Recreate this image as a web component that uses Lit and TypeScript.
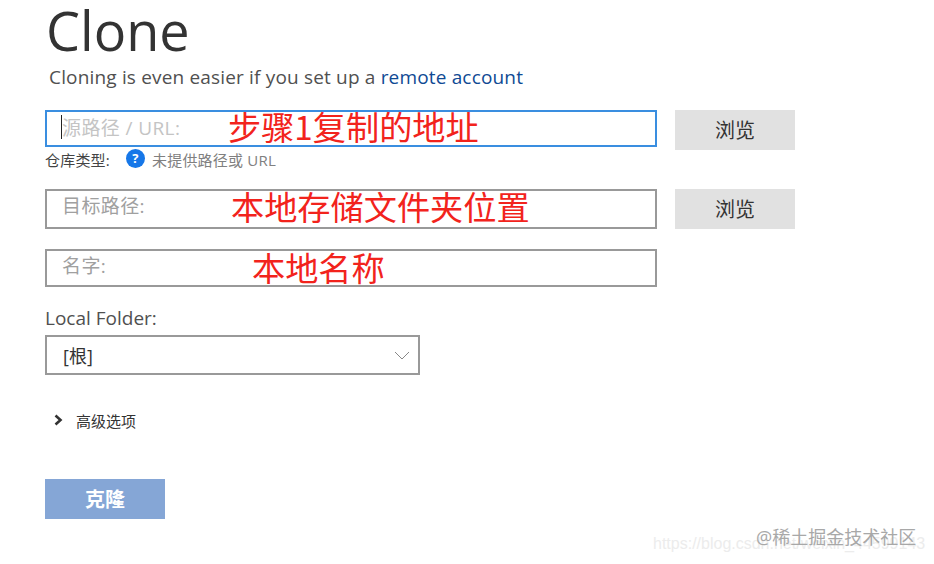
import { LitElement, html, css } from 'lit';
import { customElement } from 'lit/decorators.js';

@customElement('app-root')
export class AppRoot extends LitElement {
  static styles = css`
    :host {
      display: block;
      position: relative;
      width: 934px;
      height: 564px;
      overflow: hidden;
      background: #fff;
      font-family: 'Open Sans', 'Noto Sans CJK SC', sans-serif;
      color: #333;
    }

    .page {
      display: flex;
      flex-direction: column;
      align-items: flex-start;
      padding: 0 0 0 45px;
    }

    h1 {
      margin: 0;
      height: 62px;
      padding-left: 1px;
      font-size: 54px;
      line-height: 60px;
      font-weight: 400;
      color: #333;
    }

    .intro {
      margin: 3px 0 0 4px;
      height: 26px;
      font-size: 19px;
      letter-spacing: 0.17px;
      line-height: 24px;
      color: #505050;
    }

    .intro a {
      color: #0f4a94;
      text-decoration: none;
    }

    .row {
      display: flex;
      align-items: flex-start;
      gap: 18px;
    }

    .field {
      box-sizing: border-box;
      width: 612px;
      height: 38px;
      display: flex;
      align-items: center;
      padding: 0 15px 6px;
      border: 2px solid #999;
      background: #fff;
      font-size: 19px;
      letter-spacing: 0.4px;
      color: #a0a0a0;
    }

    .field.focus {
      height: 37px;
      padding-bottom: 4px;
      border-color: #3a8ee0;
      color: #c4c4c4;
    }

    .field.tall {
      height: 40px;
      padding-bottom: 8px;
    }

    .caret {
      width: 1px;
      height: 24px;
      margin: 0 0 0 -1px;
      background: #222;
    }

    .browse {
      width: 120px;
      height: 40px;
      padding-bottom: 1px;
      box-sizing: border-box;
      display: flex;
      align-items: center;
      justify-content: center;
      background: #e1e1e1;
      font-size: 20px;
      color: #333;
    }

    .status {
      display: flex;
      align-items: center;
      height: 20px;
      margin-top: -1px;
      margin-bottom: 2px;
      font-size: 15px;
      letter-spacing: 0.2px;
      color: #444;
    }

    .status .kind {
      width: 81px;
    }

    .status .hint {
      margin-left: 7px;
      color: #808080;
    }

    .help {
      width: 19px;
      height: 19px;
      margin-top: -2px;
      border-radius: 50%;
      display: flex;
      align-items: center;
      justify-content: center;
      background: #1677e8;
      color: #fff;
      font-size: 13px;
      font-weight: 700;
    }

    .label {
      margin-top: 17px;
      height: 31px;
      font-size: 19px;
      line-height: 28px;
      color: #505050;
    }

    .select {
      box-sizing: border-box;
      width: 375px;
      height: 40px;
      display: flex;
      align-items: center;
      justify-content: space-between;
      padding: 0 8px 0 16px;
      border: 2px solid #999;
      font-size: 18px;
      color: #333;
    }

    .advanced {
      display: flex;
      align-items: center;
      gap: 13px;
      height: 20px;
      margin-top: 35px;
      padding-left: 9px;
      font-size: 15px;
      color: #333;
    }

    .submit {
      width: 120px;
      height: 40px;
      margin-top: 49px;
      padding-bottom: 1px;
      box-sizing: border-box;
      display: flex;
      align-items: center;
      justify-content: center;
      background: #85a6d6;
      color: #fff;
      font-size: 20px;
      font-weight: 700;
    }

    .note {
      position: absolute;
      font-size: 33.2px;
      line-height: 40px;
      white-space: nowrap;
      color: #f2231c;
      font-family: 'Noto Sans CJK SC', sans-serif;
      font-weight: 400;
    }

    .mark {
      position: absolute;
      white-space: nowrap;
    }

    .mark.csdn {
      left: 653px;
      top: 535px;
      font-family: 'Liberation Sans', sans-serif;
      font-size: 16px;
      color: #ececec;
    }

    .mark.juejin {
      left: 756px;
      top: 523px;
      font-size: 18px;
      color: #a8a8a8;
    }
  `;

  render() {
    return html`
      <div class="page">
        <h1>Clone</h1>
        <div class="intro">Cloning is even easier if you set up a <a href="#">remote account</a></div>

        <div class="row" style="margin-top:19px">
          <div class="field focus"><span class="caret"></span>源路径 / URL:</div>
          <div class="browse">浏览</div>
        </div>
        <div class="status">
          <span class="kind">仓库类型:</span>
          <span class="help">?</span>
          <span class="hint">未提供路径或 URL</span>
        </div>

        <div class="row" style="margin-top:18px">
          <div class="field tall">目标路径:</div>
          <div class="browse">浏览</div>
        </div>

        <div class="field" style="margin-top:20px">名字:</div>

        <div class="label">Local Folder:</div>
        <div class="select">
          <span>[根]</span>
          <svg width="16" height="9" viewBox="0 0 16 9" fill="none" stroke="#888" stroke-width="1">
            <path d="M1 1l7 7 7-7" />
          </svg>
        </div>

        <div class="advanced">
          <svg width="9" height="12" viewBox="0 0 9 12" fill="none" stroke="#333" stroke-width="2.6">
            <path d="M1.5 1.5 6.5 6l-5 4.5" />
          </svg>
          <span>高级选项</span>
        </div>

        <div class="submit">克隆</div>
      </div>

      <span class="note" style="left:228px;top:106px">步骤1复制的地址</span>
      <span class="note" style="left:231px;top:186px">本地存储文件夹位置</span>
      <span class="note" style="left:252px;top:247px">本地名称</span>

      <span class="mark csdn">https://blog.csdn.net/weixin_44599143</span>
      <span class="mark juejin">@稀土掘金技术社区</span>
    `;
  }
}
